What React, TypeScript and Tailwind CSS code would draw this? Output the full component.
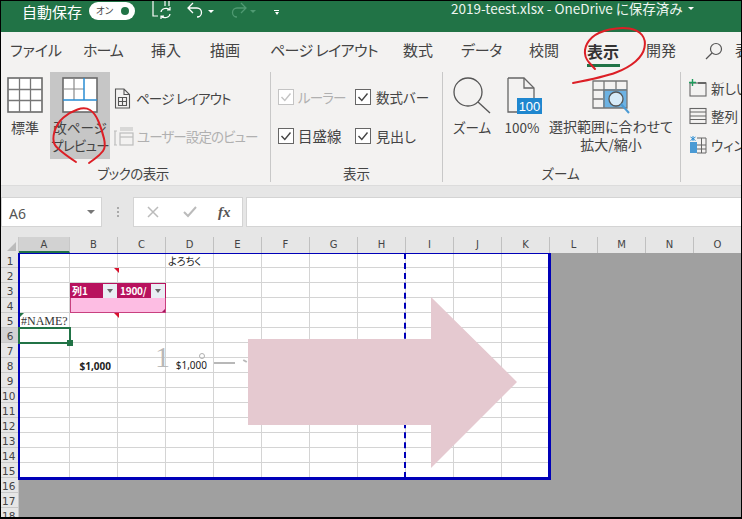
import React from "react";

const jp = "[font-family:'Noto_Sans_CJK_JP','Noto_Sans',sans-serif] [font-feature-settings:'palt']";

function smooth(p: number[][]) {
  let d = `M${p[0][0]} ${p[0][1]}`;
  for (let i = 1; i < p.length - 1; i++) {
    const mx = (p[i][0] + p[i + 1][0]) / 2;
    const my = (p[i][1] + p[i + 1][1]) / 2;
    d += ` Q${p[i][0]} ${p[i][1]} ${mx} ${my}`;
  }
  const l = p[p.length - 1];
  return d + ` L${l[0]} ${l[1]}`;
}

function GridIcon({ blue }: { blue?: boolean }) {
  return (
    <svg width="36" height="36" viewBox="0 0 36 36" className="shrink-0">
      <rect x="1" y="1" width="34" height="34" fill="#fff" stroke="#6a6a6a" strokeWidth="1.6" />
      {blue ? (
        <>
          <path d="M1 12H22M12 1V23" stroke="#8a8a8a" strokeWidth="1.2" fill="none" />
          <path d="M22 1V23M1 23H35" stroke="#2a8dd4" strokeWidth="1.5" fill="none" />
        </>
      ) : (
        <path d="M1 12.5H35M1 23.5H35M12.5 1V35M23.5 1V35" stroke="#777" strokeWidth="1.3" fill="none" />
      )}
    </svg>
  );
}

function Check({ dim }: { dim?: boolean }) {
  return (
    <svg width="16" height="16" viewBox="0 0 16 16" className="shrink-0">
      <rect x="0.5" y="0.5" width="15" height="15" fill="#fff" stroke={dim ? "#c4c4c4" : "#666"} />
      <path d="M3.5 8L6.8 11.5L12.5 4.5" fill="none" stroke={dim ? "#c4c4c4" : "#444"} strokeWidth="1.4" />
    </svg>
  );
}

const rows = Array.from({ length: 18 }, (_, i) => i + 1);
const cols = ["A", "B", "C", "D", "E", "F", "G", "H", "I", "J", "K", "L", "M", "N", "O"];

function FilterButton() {
  return (
    <span className="ml-auto mr-[1px] flex h-[14px] w-[14px] items-center justify-center bg-[#e9eef4]">
      <span className="h-0 w-0 border-x-[3.5px] border-t-[4px] border-x-transparent border-t-[#666]" />
    </span>
  );
}

function Cell({ r, c }: { r: number; c: number }) {
  const base = "relative box-border h-[15px] border-b border-r border-[#d4d4d4] text-[10px] leading-[14px] text-[#222] overflow-visible whitespace-nowrap";
  if (r === 3 && (c === 1 || c === 2)) {
    return (
      <div className={`${base} flex items-center border-b-0 border-r-0 bg-[#b8125e] pl-[2px] font-bold text-white ${jp}`}>
        <span className={c === 2 ? "text-[10px] tracking-[-0.2px]" : ""}>{c === 1 ? "列1" : "1900/"}</span>
        <FilterButton />
      </div>
    );
  }
  if (r === 4 && c === 1) return <div className={`${base} border-b-[#c8407f] border-l border-l-[#c8407f] border-r-0 bg-[#fdbde3]`} />;
  if (r === 4 && c === 2)
    return (
      <div className={`${base} border-b-[#c8407f] border-r-[#c8407f] bg-[#fdbde3]`}>
        <span className="absolute bottom-0 right-0 h-0 w-0 border-b-[3px] border-l-[3px] border-b-[#a0145a] border-l-transparent" />
      </div>
    );
  if (r === 1 && c === 3) return <div className={`${base} pl-[2px] pt-[1px] ${jp}`}>よろちく</div>;
  if (r === 5 && c === 0) return <div className={`${base} pl-[2px] pt-[1px] text-[12px] text-[#333] [font-family:'Liberation_Serif',serif]`}>#NAME?</div>;
  if (r === 8 && c === 1) return <div className={`${base} flex items-center justify-end pr-[6px] pt-[2px] font-bold text-[10.5px] [font-family:'Noto_Sans',sans-serif]`}>$1,000</div>;
  if (r === 8 && c === 3) return <div className={`${base} z-[1] flex items-center justify-end pr-[6px] text-[10.5px] [font-family:'Noto_Sans',sans-serif]`}>$1,000</div>;
  return <div className={base} />;
}

export default function App() {
  return (
    <div className={`relative box-border h-[519px] w-[742px] overflow-hidden border border-b-2 border-black bg-[#e6e6e6] ${jp}`}>
      {/* title bar */}
      <div className="flex h-[31px] items-start bg-[#217346] text-white">
        <span className="ml-[21px] text-[15px] leading-[21px]">自動保存</span>
        <div className="ml-[7px] mt-[1px] flex h-[18px] w-[46px] items-center justify-between rounded-full bg-white pl-[7px] pr-[6px]">
          <span className="text-[9.5px] leading-none text-[#444]">オン</span>
          <span className="h-[8px] w-[8px] rounded-full bg-[#217346]" />
        </div>
        <svg width="22" height="20" viewBox="0 0 22 20" className="ml-[17px]" fill="none" stroke="#fff" strokeWidth="1.2">
          <path d="M1 0V15H6M13 0V5M17 0V5" />
          <path d="M9 11A5 4 0 0 1 18 9M18 13A5 4 0 0 1 9 15M18 6V9H15M9 18V15H12" />
        </svg>
        <svg width="18" height="16" viewBox="0 0 18 16" className="ml-[13px] mt-[1px]" fill="none" stroke="#fff" strokeWidth="1.3">
          <path d="M6 1L1 6L6 11M1 6H10A4.5 4.5 0 0 1 10 15" />
        </svg>
        <span className="ml-[3px] mt-[9px] h-0 w-0 border-x-[3px] border-t-[3px] border-x-transparent border-t-white" />
        <svg width="18" height="16" viewBox="0 0 18 16" className="ml-[15px] mt-[1px]" fill="none" stroke="#4f9a72" strokeWidth="1.3">
          <path d="M12 1L17 6L12 11M17 6H8A4.5 4.5 0 0 0 8 15" />
        </svg>
        <span className="ml-[3px] mt-[9px] h-0 w-0 border-x-[3px] border-t-[3px] border-x-transparent border-t-[#4f9a72]" />
        <div className="ml-[18px] mt-[9px] flex flex-col items-center gap-[1px]">
          <span className="h-[1px] w-[5px] bg-white" />
          <span className="h-0 w-0 border-x-[2.5px] border-t-[3px] border-x-transparent border-t-white" />
        </div>
        <span className="ml-[172px] whitespace-nowrap text-[13.5px] leading-[15px] text-[#eef5f0]">
          2019-teest.xlsx - OneDrive に保存済み
        </span>
        <span className="ml-[5px] mt-[6px] h-0 w-0 border-x-[3px] border-t-[3px] border-x-transparent border-t-white" />
      </div>

      {/* tabs */}
      <div className="flex h-[40px] items-center overflow-hidden whitespace-nowrap bg-[#f3f2f1] pb-[3px] text-[15px] text-[#444]">
        <span className="ml-[9px] w-[44px]">ファイル</span>
        <span className="ml-[29px] w-[39px] tracking-[-1px]">ホーム</span>
        <span className="ml-[29px] w-[30px]">挿入</span>
        <span className="ml-[29px] w-[30px]">描画</span>
        <span className="ml-[30px] w-[103px] tracking-[-0.6px]">ページ レイアウト</span>
        <span className="ml-[30px] w-[31px]">数式</span>
        <span className="ml-[28px] w-[38px] tracking-[-0.3px]">データ</span>
        <span className="ml-[30px] w-[30px]">校閲</span>
        <span className="relative ml-[28px] w-[32px] text-[16px] font-bold text-[#333]">
          表示
          <span className="absolute bottom-[-4px] left-0 h-[3px] w-[33px] bg-[#217346]" />
        </span>
        <span className="ml-[27px] w-[31px]">開発</span>
        <svg width="18" height="18" viewBox="0 0 18 18" className="ml-[29px] shrink-0" fill="none" stroke="#555" strokeWidth="1.2">
          <circle cx="11" cy="7" r="5.5" />
          <path d="M7 11L1 17" />
        </svg>
        <span className="ml-[12px]">表</span>
      </div>

      {/* ribbon */}
      <div className="flex h-[113px] overflow-hidden bg-[#f3f2f1] text-[#444]">
        {/* ブックの表示 */}
        <div className="mb-[3px] flex w-[270px] shrink-0 flex-col border-r border-[#c8c8c8]">
          <div className="flex h-[89px]">
            <div className="ml-[6px] flex w-[36px] flex-col items-center pt-[5px]">
              <GridIcon />
              <span className="mt-[5px] text-[14px] leading-[18px]">標準</span>
            </div>
            <div className="ml-[7px] flex w-[60px] flex-col items-center bg-[#c6c6c6] pt-[5px] text-[13.5px] leading-[18px]">
              <GridIcon blue />
              <span className="mt-[5px] whitespace-nowrap">改ページ</span>
              <span className="whitespace-nowrap tracking-[-0.7px]">プレビュー</span>
            </div>
            <div className="ml-[4px] flex flex-col whitespace-nowrap text-[13.5px]">
              <div className="mt-[15px] flex h-[22px] items-center gap-[5px]">
                <svg width="17" height="21" viewBox="0 0 17 21" fill="none" stroke="#555" strokeWidth="1.1">
                  <path d="M1.5 1H10L15.5 6.5V20H1.5ZM10 1V6.5H15.5" />
                  <path d="M4.5 9.5H12.5V17.5H4.5ZM4.5 13.5H12.5M8.5 9.5V17.5" />
                </svg>
                <span className="tracking-[-0.8px]">ページ レイアウト</span>
              </div>
              <div className="mt-[16px] flex h-[22px] items-center gap-[3px] text-[#b0b0b0]">
                <svg width="20" height="21" viewBox="0 0 20 21" fill="none" stroke="#bdbdbd" strokeWidth="1.2">
                  <path d="M1 5V19M0 5H3M0 19H3M6 2H19M6 4H19" />
                  <rect x="6" y="7" width="13" height="12" />
                  <path d="M6 11H19" />
                </svg>
                <span className="tracking-[-0.9px]">ユーザー設定のビュー</span>
              </div>
            </div>
          </div>
          <div className="mt-[5px] pr-[5px] text-center text-[13.5px] leading-[18px] tracking-[-0.5px]">ブックの表示</div>
        </div>

        {/* 表示 */}
        <div className="mb-[3px] flex w-[172px] shrink-0 flex-col border-r border-[#c8c8c8] text-[13.5px]">
          <div className="flex h-[89px] flex-col pl-[7px]">
            <div className="mt-[16px] flex h-[18px] items-center whitespace-nowrap">
              <Check dim />
              <span className="ml-[4px] w-[57px] tracking-[-0.8px] text-[#b0b0b0]">ルーラー</span>
              <Check />
              <span className="ml-[5px]">数式バー</span>
            </div>
            <div className="mt-[21px] flex h-[18px] items-center whitespace-nowrap">
              <Check />
              <span className="ml-[4px] w-[57px] text-[14.5px]">目盛線</span>
              <Check />
              <span className="ml-[5px] text-[14px]">見出し</span>
            </div>
          </div>
          <div className="mt-[5px] text-center text-[13.5px] leading-[18px]">表示</div>
        </div>

        {/* ズーム */}
        <div className="mb-[3px] flex w-[238px] shrink-0 flex-col border-r border-[#c8c8c8] text-[13.5px]">
          <div className="flex h-[89px]">
            <div className="ml-[10px] flex w-[38px] flex-col items-center pt-[5px]">
              <svg width="38" height="37" viewBox="0 0 38 37" fill="none" stroke="#555" strokeWidth="1.3" className="shrink-0">
                <circle cx="15" cy="15" r="14" />
                <path d="M25 25L37 36" />
              </svg>
              <span className="mt-[4px] whitespace-nowrap leading-[18px]">ズーム</span>
            </div>
            <div className="ml-[10px] flex w-[42px] flex-col items-center pt-[5px]">
              <svg width="36" height="38" viewBox="0 0 36 38" fill="none" className="ml-[6px] shrink-0">
                <path d="M1 1H17L27 11V21M1 1V35H10" stroke="#666" strokeWidth="1.3" />
                <path d="M17 1V11H27" stroke="#666" strokeWidth="1.3" />
                <rect x="10" y="21" width="25" height="16" fill="#1f87cf" />
                <text x="22.5" y="34" textAnchor="middle" fontSize="13" fill="#fff" fontFamily="Liberation Sans">100</text>
              </svg>
              <span className="mt-[3px] whitespace-nowrap leading-[18px]">100%</span>
            </div>
            <div className="ml-[5px] flex w-[126px] flex-col items-center pt-[8px] leading-[18px]">
              <svg width="38" height="36" viewBox="0 0 38 36" fill="none" className="shrink-0">
                <rect x="11" y="9" width="24" height="19" fill="#6cb2e3" />
                <path d="M1 1H35V28H1ZM1 10H35M1 19H11M12 1V28M24 1V9" stroke="#777" strokeWidth="1.3" />
                <circle cx="24" cy="19" r="7" fill="#d7ebf8" stroke="#555" strokeWidth="1.3" />
                <path d="M29 24L37 33" stroke="#4a9ad4" strokeWidth="2" />
              </svg>
              <span className="mt-[1px] whitespace-nowrap text-[14px]">選択範囲に合わせて</span>
              <span className="whitespace-nowrap text-[14px]">拡大/縮小</span>
            </div>
          </div>
          <div className="mt-[5px] pr-[2px] text-center text-[13.5px] leading-[18px]">ズーム</div>
        </div>

        {/* ウィンドウ */}
        <div className="flex shrink-0 flex-col whitespace-nowrap pl-[8px] text-[13.5px]">
          <div className="mt-[5px] flex h-[22px] items-center gap-[4px]">
            <svg width="18" height="18" viewBox="0 0 18 18" fill="none">
              <rect x="1" y="4" width="16" height="13" stroke="#666" strokeWidth="1.1" />
              <path d="M0 3.5H7M3.5 0V7" stroke="#1e9b5c" strokeWidth="1.4" />
              <path d="M9 4H17" stroke="#666" strokeWidth="2" />
            </svg>
            新しい
          </div>
          <div className="mt-[6px] flex h-[22px] items-center gap-[4px]">
            <svg width="18" height="18" viewBox="0 0 18 18" fill="none" stroke="#666" strokeWidth="1.1">
              <rect x="1" y="1.5" width="16" height="15" />
              <path d="M1 5H17M1 9H17M1 12.5H17" />
            </svg>
            整列
          </div>
          <div className="mt-[7px] flex h-[22px] items-center gap-[4px]">
            <svg width="18" height="18" viewBox="0 0 18 18" fill="none">
              <rect x="1" y="6" width="7" height="5" fill="#4a9ad4" />
              <rect x="1" y="11" width="7" height="6" fill="#4a9ad4" />
              <path d="M8 2H17V17H8M8 9H17M12.5 2V17M8 13H17" stroke="#666" strokeWidth="1" />
              <path d="M4 0V5M1.5 1L6.5 4.5M6.5 1L1.5 4.5" stroke="#2a8dd4" strokeWidth="1" />
            </svg>
            ウィンドウ
          </div>
        </div>
      </div>

      {/* formula bar */}
      <div className="flex h-[52px] items-start border-t border-[#dcdcdc] bg-[#e6e6e6] pt-[11px]">
        <div className="flex h-[30px] w-[101px] shrink-0 items-center justify-between border border-[#d4d4d4] bg-white pl-[7px] pr-[6px] text-[14px] text-[#555] [font-family:'Noto_Sans',sans-serif]">
          <span className="mt-[2px]">A6</span>
          <span className="h-0 w-0 border-x-[4px] border-t-[4px] border-x-transparent border-t-[#777]" />
        </div>
        <div className="flex h-[30px] w-[31px] shrink-0 flex-col items-center justify-center gap-[2px]">
          <span className="h-[2px] w-[2px] bg-[#aaa]" />
          <span className="h-[2px] w-[2px] bg-[#aaa]" />
          <span className="h-[2px] w-[2px] bg-[#aaa]" />
        </div>
        <div className="flex h-[30px] w-[110px] shrink-0 items-center border border-[#d4d4d4] bg-white">
          <svg width="12" height="12" viewBox="0 0 12 12" className="ml-[13px]" stroke="#bbb" strokeWidth="1.5"><path d="M1 1L11 11M11 1L1 11" /></svg>
          <svg width="14" height="12" viewBox="0 0 14 12" className="ml-[24px]" fill="none" stroke="#bbb" strokeWidth="2"><path d="M1 6L5 10L13 1" /></svg>
          <span className="ml-[21px] text-[15px] font-bold italic text-[#555] [font-family:'Liberation_Serif',serif]">fx</span>
        </div>
        <div className="ml-[3px] h-[30px] flex-1 border-y border-l border-[#d4d4d4] bg-white" />
      </div>

      {/* column headers */}
      <div className="flex h-[16px] bg-[#e6e6e6] text-[10px] leading-[16px] text-[#444] [font-family:'DejaVu_Sans',sans-serif]">
        <div className="relative w-[18px] shrink-0 border-r border-[#c8c8c8]">
          <span className="absolute bottom-[2px] right-[2px] h-0 w-0 border-b-[9px] border-l-[9px] border-b-[#bbb] border-l-transparent" />
        </div>
        {cols.map((c, i) => (
          <div
            key={c}
            className={
              i === 0
                ? "box-border w-[51px] shrink-0 border-b-2 border-r border-b-[#217346] border-r-[#c8c8c8] bg-[#d2d2d2] text-center"
                : "box-border w-[48px] shrink-0 border-r border-[#c0c0c0] text-center"
            }
          >
            {c}
          </div>
        ))}
      </div>

      {/* sheet */}
      <div className="flex">
        <div className="w-[18px] shrink-0 text-[10.5px] text-[#444] [font-family:'DejaVu_Sans',sans-serif]">
          {rows.map((r) => (
            <div
              key={r}
              className={`box-border h-[15px] overflow-hidden border-b border-r border-[#c8c8c8] pl-[1px] pt-[1px] leading-[14px] ${r === 6 ? "bg-[#d2d2d2]" : "bg-[#e6e6e6]"} ${r < 10 ? "text-center" : ""}`}
            >
              {r}
            </div>
          ))}
        </div>
        <div className="relative h-[270px] flex-1 bg-[#a0a0a0]">
          <div className="grid w-[531px] grid-cols-[51px_repeat(10,48px)] bg-white">
            {Array.from({ length: 15 }, (_, r) =>
              Array.from({ length: 11 }, (_, c) => <Cell key={`${r}-${c}`} r={r + 1} c={c} />)
            )}
          </div>

          {/* ghost wordart, behind the cell text */}
          <div className="absolute left-[136px] top-[87px] whitespace-nowrap text-[30px] font-light leading-[34px] text-[#b8b8b8] [font-family:'Liberation_Serif',serif]">
            1
          </div>
          <span className="absolute left-[180px] top-[100px] h-[6px] w-[6px] rounded-full border border-[#b0b0b0]" />
          <span className="absolute left-[194px] top-[109px] h-[2px] w-[22px] bg-[#b8b8b8]" />
          <span className="absolute left-[224px] top-[107px] h-[2px] w-[4px] rotate-[30deg] bg-[#b8b8b8]" />

          {/* print area */}
          <div className="absolute left-[-1px] top-0 box-border h-[227px] w-[533px] border-b-[3px] border-l-2 border-r-[3px] border-t border-[#0000b8]" />
          {/* page break */}
          <div className="absolute left-[385px] top-0 h-[225px] border-l-2 border-dashed border-[#0000b8]" />
          {/* comment markers */}
          <span className="absolute left-[95px] top-[15px] h-0 w-0 border-l-[5px] border-t-[5px] border-l-transparent border-t-[#d8102c]" />
          <span className="absolute left-[95px] top-[60px] h-0 w-0 border-l-[5px] border-t-[5px] border-l-transparent border-t-[#d8102c]" />
          <span className="absolute left-[1px] top-[60px] h-0 w-0 border-r-[4px] border-t-[4px] border-r-transparent border-t-[#217346]" />
          {/* selected cell */}
          <div className="absolute left-[-1px] top-[74px] box-border h-[17px] w-[53px] border-2 border-[#217346]" />
          <span className="absolute left-[48px] top-[87px] h-[6px] w-[6px] bg-[#217346]" />
        </div>
      </div>

      {/* drawn shapes and ink over the sheet */}
      <svg width="742" height="519" viewBox="0 0 742 519" className="absolute left-[-1px] top-[-1px]" fill="none">
        <polygon points="248,339 431,339 431,297 517,382 431,468 431,425 248,425" fill="#e5c9d0" />
        <path
          d={smooth([[573, 83], [604, 77], [628, 68], [643, 55], [646, 40], [638, 30], [621, 27], [598, 32], [586, 43], [584, 57], [595, 69]])}
          stroke="#dc1f26"
          strokeWidth="2"
          strokeLinecap="round"
        />
        <path
          d={smooth([[76, 162], [58, 150], [52, 140], [57, 123], [70, 112], [85, 107], [95, 113], [102, 130], [106, 147], [100, 155], [89, 163]])}
          stroke="#dc1f26"
          strokeWidth="2"
          strokeLinecap="round"
        />
      </svg>
    </div>
  );
}
